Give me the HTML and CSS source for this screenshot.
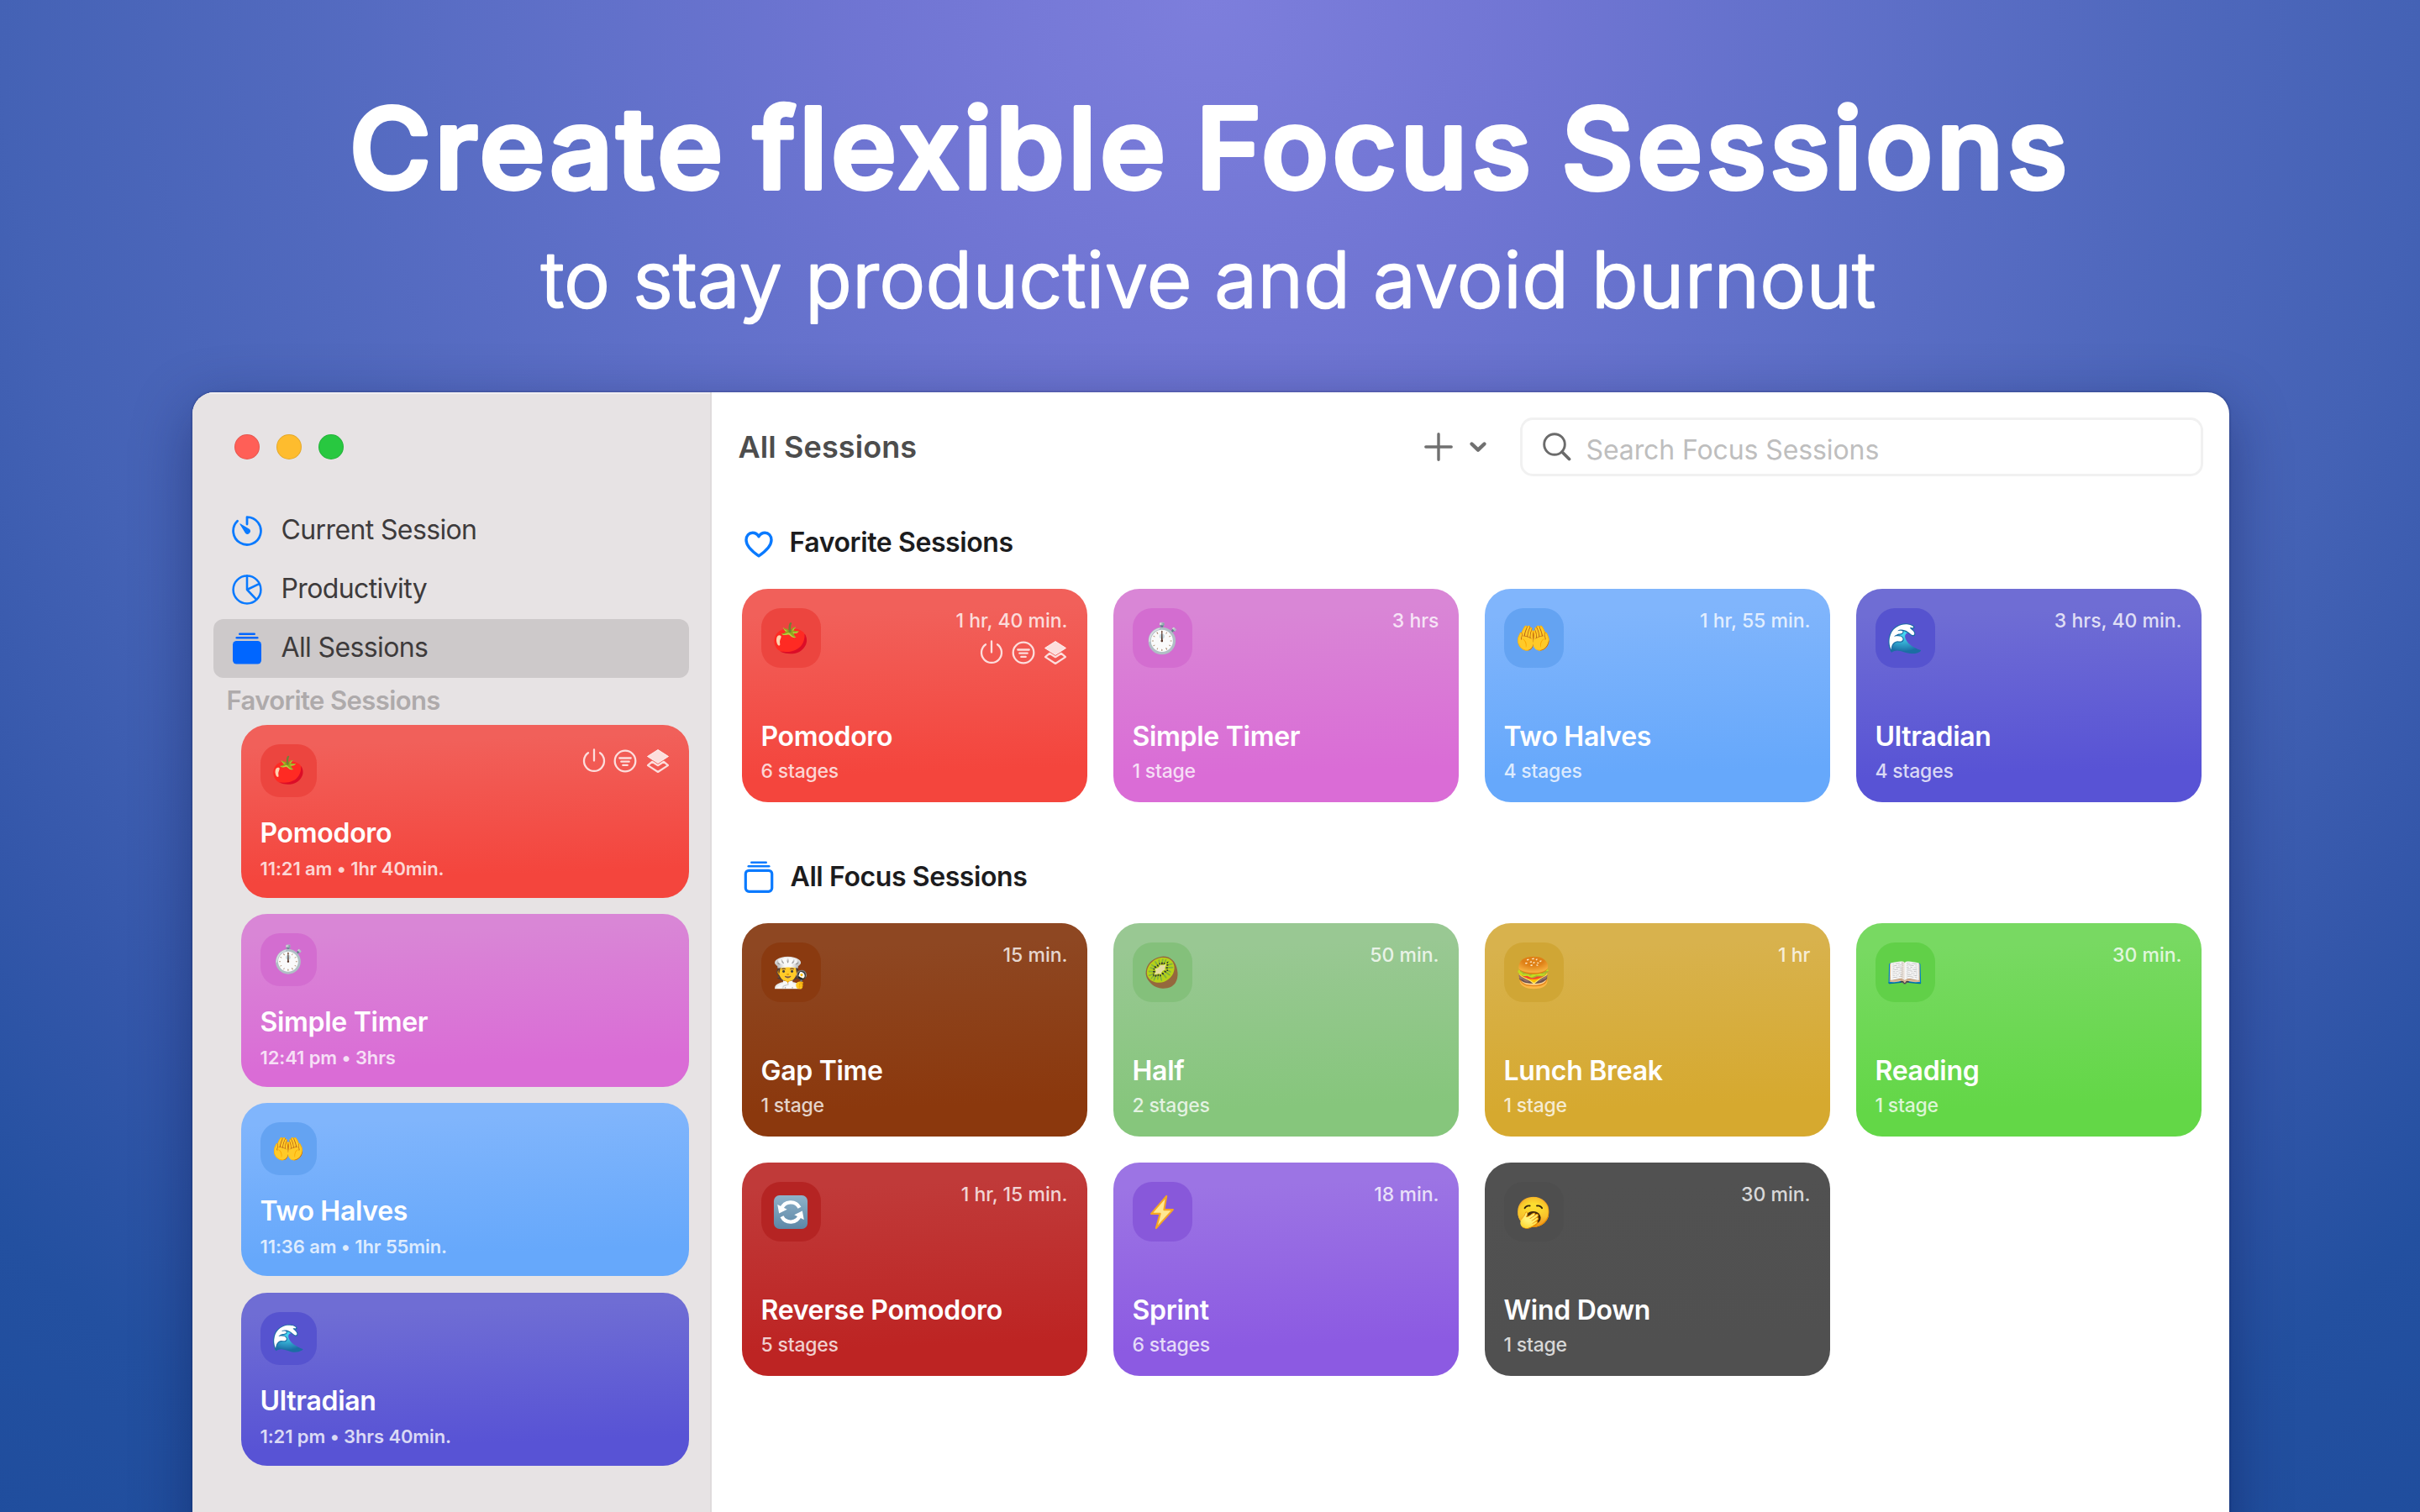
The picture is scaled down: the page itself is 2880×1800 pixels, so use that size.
FILE: index.html
```html
<!DOCTYPE html>
<html lang="en">
<head>
<meta charset="utf-8">
<title>Create flexible Focus Sessions</title>
<link rel="stylesheet" href="styles.css">
</head>
<body>
<svg class="sprite" aria-hidden="true">
  <symbol id="i-timer" viewBox="0 0 34 34">
    <path d="M17 9.500V1.500A15.500 15.500 0 1 1 6.200 5.900" fill="none" stroke="currentColor" stroke-width="2.600" stroke-linecap="round" stroke-linejoin="round"/>
    <path d="M9.300 9.300 19.300 15.300A2.600 2.600 0 1 1 15.400 19.200Z" fill="currentColor" stroke="currentColor" stroke-width="1" stroke-linejoin="round"/>
  </symbol>
  <symbol id="i-pie" viewBox="0 0 34 34">
    <g fill="none" stroke="currentColor" stroke-width="2.400" stroke-linecap="round" stroke-linejoin="round"><circle cx="17" cy="17" r="15.500"/><path d="M17 1.500V17L30.500 10.500M17 17 27.500 28"/></g>
  </symbol>
  <symbol id="i-stack-fill" viewBox="0 0 36 38">
    <rect x="8" y="0.500" width="20" height="2.400" rx="1.200" fill="currentColor"/><rect x="4.500" y="5" width="27" height="2.600" rx="1.300" fill="currentColor"/><rect x="1" y="10" width="34" height="27.500" rx="4.500" fill="currentColor"/>
  </symbol>
  <symbol id="i-stack" viewBox="0 0 36 38">
    <rect x="8" y="0.500" width="20" height="2.400" rx="1.200" fill="currentColor"/><rect x="4.500" y="5" width="27" height="2.600" rx="1.300" fill="currentColor"/><rect x="2.300" y="11.300" width="31.400" height="25" rx="4" fill="none" stroke="currentColor" stroke-width="3.200"/>
  </symbol>
  <symbol id="i-heart" viewBox="0 0 34 32">
    <path d="M17 29.800C12 26.500 2 19.500 2 10.800 2 5.800 5.400 2.200 9.600 2.200c3.200 0 5.800 1.700 7.400 4.600 1.600-2.900 4.200-4.600 7.400-4.600 4.200 0 7.600 3.600 7.600 8.600C32 19.500 22 26.500 17 29.800Z" fill="none" stroke="currentColor" stroke-width="3.400" stroke-linejoin="round"/>
  </symbol>
  <symbol id="i-power" viewBox="0 0 28 30">
    <path d="M14 1.500V14.500M7 5.200A12 12 0 1 0 21 5.200" fill="none" stroke="currentColor" stroke-width="2.300" stroke-linecap="round"/>
  </symbol>
  <symbol id="i-filter" viewBox="0 0 28 30">
    <circle cx="14" cy="15" r="12.300" fill="none" stroke="currentColor" stroke-width="2.300"/><path d="M7.300 11.500H20.700M9.300 15.700H18.700M11.300 19.900H16.700" stroke="currentColor" stroke-width="2.300" stroke-linecap="round"/>
  </symbol>
  <symbol id="i-layers" viewBox="0 0 28 30">
    <path d="M14 1.500 26.500 9.500 14 17.500 1.500 9.500Z" fill="currentColor" stroke="currentColor" stroke-linejoin="round"/><path d="M7 15.800 2 20.200 14 28 26 20.200 21 15.800 14 20.200Z" fill="none" stroke="currentColor" stroke-width="2.200" stroke-linejoin="round"/>
  </symbol>
</svg>

<header class="hero">
  <h1 class="hero-title">
    <svg class="hero-line" viewBox="0 0 2880 256"><text class="title-text" x="416" y="224" textLength="2044">Create flexible Focus Sessions</text></svg>
  </h1>
  <p class="hero-sub">
    <svg class="hero-line" viewBox="0 0 2880 150"><text class="sub-text" x="644" y="109.500" textLength="1588">to stay productive and avoid burnout</text></svg>
  </p>
</header>

<div class="window">
  <aside class="sidebar">
    <div class="lights"><span class="light red"></span><span class="light yellow"></span><span class="light green"></span></div>
    <nav class="nav">
      <a class="nav-item"><svg class="nav-icon"><use href="#i-timer"/></svg><span>Current Session</span></a>
      <a class="nav-item"><svg class="nav-icon"><use href="#i-pie"/></svg><span>Productivity</span></a>
      <a class="nav-item active"><svg class="nav-icon tall"><use href="#i-stack-fill"/></svg><span>All Sessions</span></a>
    </nav>
    <h2 class="side-label">Favorite Sessions</h2>
    <div class="side-list">
      <article class="card small pomodoro">
        <div class="card-top"><div class="tile">🍅</div><div class="flags"><svg><use href="#i-power"/></svg><svg><use href="#i-filter"/></svg><svg><use href="#i-layers"/></svg></div></div>
        <div class="card-text"><h3>Pomodoro</h3><p>11:21 am • 1hr 40min.</p></div>
      </article>
      <article class="card small timer">
        <div class="card-top"><div class="tile">⏱️</div></div>
        <div class="card-text"><h3>Simple Timer</h3><p>12:41 pm • 3hrs</p></div>
      </article>
      <article class="card small halves">
        <div class="card-top"><div class="tile">🤲</div></div>
        <div class="card-text"><h3>Two Halves</h3><p>11:36 am • 1hr 55min.</p></div>
      </article>
      <article class="card small ultradian">
        <div class="card-top"><div class="tile">🌊</div></div>
        <div class="card-text"><h3>Ultradian</h3><p>1:21 pm • 3hrs 40min.</p></div>
      </article>
    </div>
  </aside>

  <main class="main">
    <div class="toolbar">
      <h2 class="toolbar-title">All Sessions</h2>
      <div class="add">
        <svg class="plus" viewBox="0 0 34 34"><path d="M17 1.800V32.200M1.800 17H32.200" stroke="currentColor" stroke-width="3.400" stroke-linecap="round"/></svg>
        <svg class="chevron" viewBox="0 0 22 16"><path d="M3.500 4.500 11 11.700 18.500 4.500" fill="none" stroke="currentColor" stroke-width="4.400" stroke-linecap="round" stroke-linejoin="round"/></svg>
      </div>
      <div class="search">
        <svg class="glass" viewBox="0 0 34 34"><circle cx="14" cy="14" r="12.300" fill="none" stroke="currentColor" stroke-width="2.900"/><path d="M23 23 31.500 31.500" stroke="currentColor" stroke-width="3.800" stroke-linecap="round"/></svg>
        <span class="placeholder">Search Focus Sessions</span>
      </div>
    </div>

    <section class="group">
      <h2 class="group-title"><svg class="group-icon heart"><use href="#i-heart"/></svg>Favorite Sessions</h2>
      <div class="grid">
        <article class="card pomodoro">
          <div class="card-top"><div class="tile">🍅</div><div class="meta"><span>1 hr, 40 min.</span><div class="flags"><svg><use href="#i-power"/></svg><svg><use href="#i-filter"/></svg><svg><use href="#i-layers"/></svg></div></div></div>
          <div class="card-text"><h3>Pomodoro</h3><p>6 stages</p></div>
        </article>
        <article class="card timer">
          <div class="card-top"><div class="tile">⏱️</div><div class="meta"><span>3 hrs</span></div></div>
          <div class="card-text"><h3>Simple Timer</h3><p>1 stage</p></div>
        </article>
        <article class="card halves">
          <div class="card-top"><div class="tile">🤲</div><div class="meta"><span>1 hr, 55 min.</span></div></div>
          <div class="card-text"><h3>Two Halves</h3><p>4 stages</p></div>
        </article>
        <article class="card ultradian">
          <div class="card-top"><div class="tile">🌊</div><div class="meta"><span>3 hrs, 40 min.</span></div></div>
          <div class="card-text"><h3>Ultradian</h3><p>4 stages</p></div>
        </article>
      </div>
    </section>

    <section class="group">
      <h2 class="group-title wide"><svg class="group-icon"><use href="#i-stack"/></svg>All Focus Sessions</h2>
      <div class="grid">
        <article class="card gap">
          <div class="card-top"><div class="tile">🧑‍🍳</div><div class="meta"><span>15 min.</span></div></div>
          <div class="card-text"><h3>Gap Time</h3><p>1 stage</p></div>
        </article>
        <article class="card half">
          <div class="card-top"><div class="tile">🥝</div><div class="meta"><span>50 min.</span></div></div>
          <div class="card-text"><h3>Half</h3><p>2 stages</p></div>
        </article>
        <article class="card lunch">
          <div class="card-top"><div class="tile">🍔</div><div class="meta"><span>1 hr</span></div></div>
          <div class="card-text"><h3>Lunch Break</h3><p>1 stage</p></div>
        </article>
        <article class="card reading">
          <div class="card-top"><div class="tile"><span class="book">📖</span></div><div class="meta"><span>30 min.</span></div></div>
          <div class="card-text"><h3>Reading</h3><p>1 stage</p></div>
        </article>
        <article class="card reverse">
          <div class="card-top">
            <div class="tile">
              <svg class="drawn" viewBox="0 0 44 44">
                <defs><linearGradient id="steel" x2="0" y2="1"><stop stop-color="#8fb2c9"/><stop offset="1" stop-color="#5c87a6"/></linearGradient></defs>
                <rect x="1" y="1" width="42" height="42" rx="7" fill="url(#steel)"/>
                <g fill="none" stroke="#fff" stroke-width="4.600"><path d="M10.500 18A12.300 12.300 0 0 1 33 16.500"/><path d="M33.500 26A12.300 12.300 0 0 1 11 27.500"/></g>
                <path d="M5.500 12.500 7.500 23.500 17.500 18.500ZM38.500 31.500 36.500 20.500 26.500 25.500Z" fill="#fff"/>
              </svg>
            </div>
            <div class="meta"><span>1 hr, 15 min.</span></div>
          </div>
          <div class="card-text"><h3>Reverse Pomodoro</h3><p>5 stages</p></div>
        </article>
        <article class="card sprint">
          <div class="card-top">
            <div class="tile">
              <svg class="drawn" viewBox="0 0 44 44"><path d="M27.500 2 8.500 24H19.500L14.500 42 35.500 19H24.500Z" fill="#ffe892" stroke="#f5a623" stroke-width="2.200" stroke-linejoin="round"/></svg>
            </div>
            <div class="meta"><span>18 min.</span></div>
          </div>
          <div class="card-text"><h3>Sprint</h3><p>6 stages</p></div>
        </article>
        <article class="card wind">
          <div class="card-top"><div class="tile">🥱</div><div class="meta"><span>30 min.</span></div></div>
          <div class="card-text"><h3>Wind Down</h3><p>1 stage</p></div>
        </article>
      </div>
    </section>
  </main>
</div>
</body>
</html>
```
FILE: styles.css
```css
* { box-sizing: border-box; margin: 0; padding: 0; }

html, body { height: 1800px; }

body {
  display: flex;
  flex-direction: column;
  align-items: center;
  overflow: hidden;
  font-family: Inter, "Liberation Sans", sans-serif;
  background: radial-gradient(circle at 50% 0, #7d7edc 0, #7075d3 400px, #6070c9 750px, #5169be 1100px, #4462b5 1440px, #3457aa 1750px, #2350a0 2050px, #1f4d9d 2350px);
}

.sprite { display: none; }
svg { display: block; flex: none; }
h1, h2, h3 { font-weight: 600; }

/* Headline */
.hero { flex: none; width: 100%; height: 467px; }
.hero-title { height: 256px; }
.hero-sub { height: 150px; }
.hero-line { width: 100%; height: 100%; overflow: visible; }
.hero-line text { fill: #fff; stroke: #fff; stroke-linejoin: round; }
.title-text { font-size: 132px; font-weight: 550; stroke-width: 6px; word-spacing: -8px; }
.sub-text { font-size: 92px; font-weight: 300; stroke-width: 2.6px; }

/* Window */
.window {
  flex: none;
  display: flex;
  width: 2424px;
  height: 1400px;
  margin-left: 1px;
  border-radius: 26px 26px 0 0;
  overflow: hidden;
  background: #fff;
  box-shadow: 0 20px 70px rgba(10, 20, 70, .42), 0 0 3px rgba(10, 20, 70, .5);
}

.sidebar {
  flex: none;
  width: 618px;
  padding: 50px 25px 0 25px;
  background: #e7e3e4;
  border-right: 2px solid #dfdbdc;
  box-shadow: inset 0 2px 0 #f0eef2;
}

.lights { display: flex; gap: 20px; padding-left: 25px; }
.light { width: 30px; height: 30px; border-radius: 50%; border: 1px solid rgba(0, 0, 0, .1); }
.red { background: #ff5f57; }
.yellow { background: #febc2e; }
.green { background: #28c840; }

.nav { margin-top: 50px; }
.nav-item {
  display: flex;
  align-items: center;
  gap: 23px;
  height: 70px;
  padding-left: 22px;
  border-radius: 12px;
  font-size: 32px;
  letter-spacing: -.62px;
  color: #3e3b3c;
}
.nav-item span { padding-bottom: 3px; }
.nav-item.active { background: #cdc9ca; }
.nav-icon { width: 36px; height: 36px; color: #0a7aff; }
.nav-icon.tall { height: 38px; color: #0066ff; }

.side-label {
  padding-left: 16px;
  margin-top: 7px;
  font-size: 31px;
  line-height: 40px;
  letter-spacing: -.6px;
  color: #aeaaab;
}

.side-list {
  display: flex;
  flex-direction: column;
  gap: 19.4px;
  margin: 8.500px 0 0 33px;
}

/* Cards */
.card {
  display: flex;
  flex-direction: column;
  justify-content: space-between;
  height: 254px;
  padding: 23px 23px 22px 23px;
  border-radius: 31px;
  color: #fff;
  background: linear-gradient(178deg, var(--from) 12%, var(--to) 84%);
}
.card-top { display: flex; justify-content: space-between; }
.tile {
  display: flex;
  align-items: center;
  justify-content: center;
  width: 71px;
  height: 71px;
  border-radius: 23px;
  background: var(--tile);
  font-size: 35px;
  line-height: 1;
}
.drawn { width: 42px; height: 42px; }
.book { filter: hue-rotate(200deg); }
.meta {
  display: flex;
  flex-direction: column;
  align-items: flex-end;
  font-size: 23px;
  line-height: 30px;
  font-weight: 500;
  color: rgba(255, 255, 255, .8);
}
.card-text h3 { font-size: 32px; line-height: 40px; letter-spacing: -.3px; }
.card-text p { margin-top: 6px; font-size: 23px; line-height: 30px; font-weight: 500; letter-spacing: -.2px; color: rgba(255, 255, 255, .78); }
.flags { display: flex; gap: 10px; margin: 8px 1px 0 0; color: rgba(255, 255, 255, .8); }
.flags svg { width: 28px; height: 30px; }

.small { height: 206px; padding: 23px 23px 21px; }
.small .tile { width: 67px; height: 63px; font-size: 32px; }
.small .card-text p { margin-top: 8px; font-size: 22px; line-height: 28px; font-weight: 600; letter-spacing: -.1px; }
.small .flags { margin: 5px 0 0; gap: 9px; }
.small .flags svg:last-child { margin-left: 2px; }

.pomodoro { --from: #f1605a; --to: #f4453d; --tile: #ec453f; }
.timer { --from: #d986d6; --to: #da6cd6; --tile: #d36dd0; }
.halves { --from: #80b5fc; --to: #66a8fb; --tile: #64a3f2; }
.ultradian { --from: #6f6dd4; --to: #5853d5; --tile: #5653cf; }
.gap { --from: #8e4722; --to: #8b380d; --tile: #8a3a10; }
.half { --from: #99c893; --to: #86c67c; --tile: #84c07b; }
.lunch { --from: #d8b24d; --to: #d6a92f; --tile: #d0a635; }
.reading { --from: #78d962; --to: #63d747; --tile: #61d048; }
.reverse { --from: #c03a39; --to: #bd2423; --tile: #b52423; }
.sprint { --from: #9c74e4; --to: #8c5ae2; --tile: #8858da; }
.wind { --from: #515151; --to: #505050; --tile: #4e4e4e; }

/* Main pane */
.main { flex: 1; min-width: 0; padding: 30px 33px 0 36px; }

.toolbar { display: flex; align-items: center; height: 70px; margin: 0 -2px 0 -4px; }
.toolbar-title { padding-bottom: 1px; font-size: 36px; line-height: 44px; letter-spacing: .1px; color: #4d4d4d; }
.add { display: flex; align-items: center; gap: 19px; margin-left: auto; color: #707070; }
.plus { width: 34px; height: 34px; }
.chevron { width: 22px; height: 16px; }
.search {
  display: flex;
  align-items: center;
  gap: 18px;
  width: 813px;
  height: 70px;
  margin-left: 39px;
  padding-left: 24px;
  border: 3px solid #f1f1f1;
  border-radius: 15px;
}
.glass { width: 34px; height: 34px; color: #6b6b6b; }
.placeholder { padding-top: 7px; font-size: 32px; line-height: 40px; letter-spacing: -.1px; color: #bebebe; }

.group { margin-top: 59px; }
.group + .group { margin-top: 69px; }
.group-title {
  display: flex;
  align-items: center;
  gap: 20px;
  padding-left: 3px;
  margin-bottom: 35px;
  font-size: 32px;
  line-height: 40px;
  letter-spacing: -.4px;
  color: #1c1c1e;
}
.group-title.wide { padding-left: 2px; }
.group-icon { width: 36px; height: 38px; color: #0a7aff; }
.group-icon.heart { width: 34px; height: 32px; margin-top: 3px; }

.grid { display: grid; grid-template-columns: repeat(4, 1fr); gap: 31px; }
```
